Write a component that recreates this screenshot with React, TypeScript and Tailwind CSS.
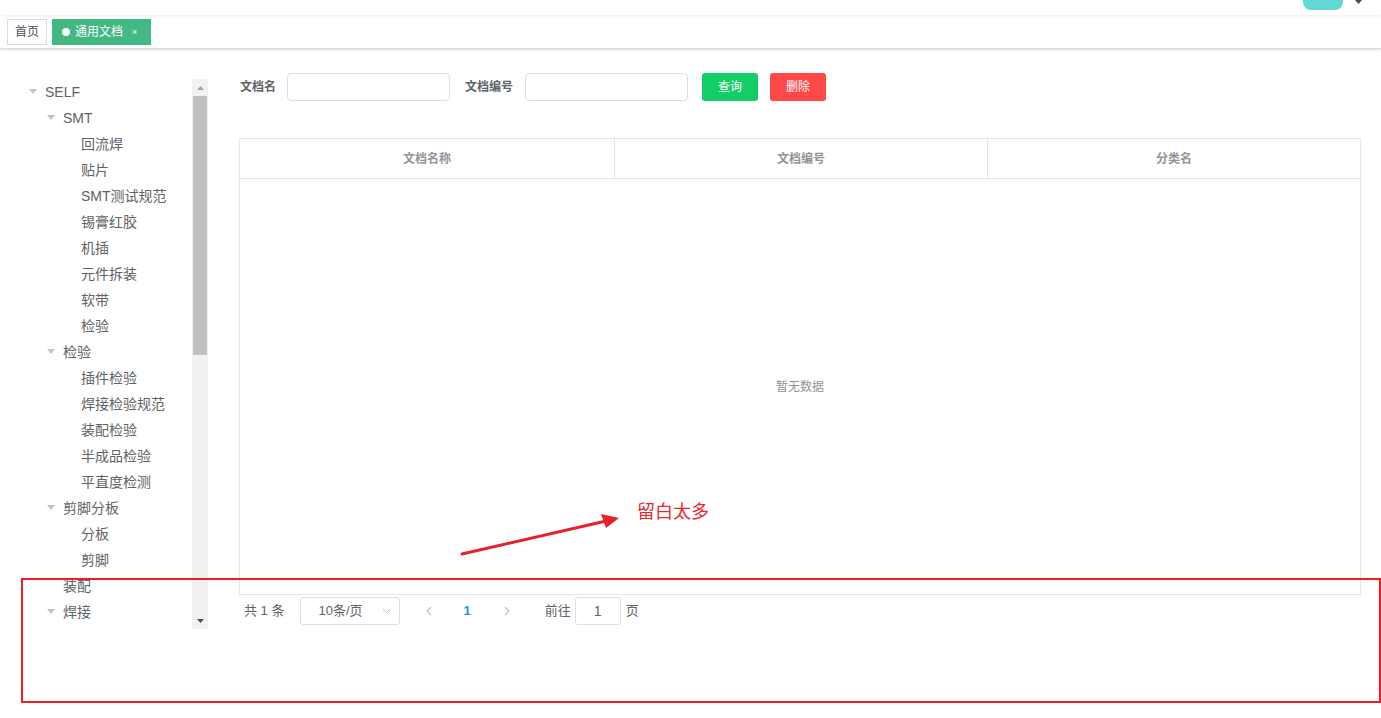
import React from "react";

type Node = { label: string; level: number; expand?: boolean };

const tree: Node[] = [
  { label: "SELF", level: 0, expand: true },
  { label: "SMT", level: 1, expand: true },
  { label: "回流焊", level: 2 },
  { label: "贴片", level: 2 },
  { label: "SMT测试规范", level: 2 },
  { label: "锡膏红胶", level: 2 },
  { label: "机插", level: 2 },
  { label: "元件拆装", level: 2 },
  { label: "软带", level: 2 },
  { label: "检验", level: 2 },
  { label: "检验", level: 1, expand: true },
  { label: "插件检验", level: 2 },
  { label: "焊接检验规范", level: 2 },
  { label: "装配检验", level: 2 },
  { label: "半成品检验", level: 2 },
  { label: "平直度检测", level: 2 },
  { label: "剪脚分板", level: 1, expand: true },
  { label: "分板", level: 2 },
  { label: "剪脚", level: 2 },
  { label: "装配", level: 1 },
  { label: "焊接", level: 1, expand: true },
];

const pad = ["pl-0", "pl-[18px]", "pl-[36px]"];

function Caret() {
  return (
    <svg width="8" height="6" viewBox="0 0 8 6">
      <path d="M0 0 L8 0 L4 5 Z" fill="#c0c4cc" />
    </svg>
  );
}

export default function App() {
  return (
    <div
      className="relative w-[1381px] h-[718px] overflow-hidden bg-white text-[#606266]"
      style={{ fontFamily: '"Liberation Sans", "Noto Sans CJK SC", sans-serif' }}
    >
      {/* navbar */}
      <div className="relative h-[15px] bg-white shadow-[0_1px_4px_rgba(0,21,41,0.08)]">
        <div className="absolute left-[1303px] top-0 w-[40px] h-[10px] rounded-b-[8px] bg-[#63d9d4]" />
        <svg className="absolute left-[1355px] top-0" width="7" height="4" viewBox="0 0 7 4">
          <path d="M0 0 L7 0 L3.5 4 Z" fill="#5a4a3a" />
        </svg>
      </div>
      {/* tags view */}
      <div className="h-[34px] bg-white border-b border-[#d8dce5] shadow-[0_1px_3px_0_rgba(0,0,0,0.12),0_0_3px_0_rgba(0,0,0,0.04)] flex items-center gap-[5px] pl-[7px] pt-[1px]">
        <div className="h-[26px] px-[7px] border border-[#d8dce5] bg-white text-[12px] text-[#495060] flex items-center">
          首页
        </div>
        <div className="h-[26px] pl-[9px] pr-[13px] border border-[#42b983] bg-[#42b983] text-[12px] text-white flex items-center">
          <span className="w-[8px] h-[8px] rounded-full bg-white mr-[5px]" />
          <span>通用文档</span>
          <span className="ml-[9px] text-[9px] leading-none">×</span>
        </div>
      </div>

      {/* main */}
      <div className="flex pt-[30px]">
        {/* sidebar tree */}
        <div className="ml-[21px] w-[187px] h-[550px] flex">
          <div className="flex-1 overflow-hidden">
            {tree.map((n, i) => (
              <div key={i} className={`h-[26px] flex items-center ${pad[n.level]}`}>
                <span className="w-[24px] flex items-center justify-center">
                  {n.expand ? <Caret /> : null}
                </span>
                <span className="text-[14px] text-[#606266]">{n.label}</span>
              </div>
            ))}
          </div>
          <div className="w-[16px] h-full bg-[#f1f1f1] flex flex-col">
            <div className="h-[17px] flex items-center justify-center">
              <svg width="7" height="4" viewBox="0 0 7 4">
                <path d="M0 4 L7 4 L3.5 0 Z" fill="#a3a3a3" />
              </svg>
            </div>
            <div className="mx-[1px] h-[259px] bg-[#c1c1c1]" />
            <div className="flex-1" />
            <div className="h-[17px] flex items-center justify-center">
              <svg width="7" height="4" viewBox="0 0 7 4">
                <path d="M0 0 L7 0 L3.5 4 Z" fill="#505050" />
              </svg>
            </div>
          </div>
        </div>

        {/* content */}
        <div className="ml-[31px] w-[1122px] -mt-[6px]">
          {/* form */}
          <div className="flex items-center h-[28px]">
            <span className="ml-[1px] text-[12px] font-bold text-[#606266] w-[47px]">文档名</span>
            <div className="w-[163px] h-[28px] border border-[#dcdfe6] rounded-[4px] bg-white" />
            <span className="ml-[15px] text-[12px] font-bold text-[#606266] w-[60px]">文档编号</span>
            <div className="w-[163px] h-[28px] border border-[#dcdfe6] rounded-[4px] bg-white" />
            <button className="ml-[14px] w-[56px] h-[28px] rounded-[3px] bg-[#13ce66] text-white text-[12px]">
              查询
            </button>
            <button className="ml-[12px] w-[56px] h-[28px] rounded-[3px] bg-[#ff4949] text-white text-[12px]">
              删除
            </button>
          </div>

          {/* table */}
          <div className="mt-[37px] h-[457px] border border-[#dfe6ec] flex flex-col">
            <div className="h-[40px] grid grid-cols-[375px_373px_1fr] border-b border-[#dfe6ec] text-[12px] font-bold text-[#909399]">
              <div className="flex items-center justify-center border-r border-[#dfe6ec]">文档名称</div>
              <div className="flex items-center justify-center border-r border-[#dfe6ec]">文档编号</div>
              <div className="flex items-center justify-center">分类名</div>
            </div>
            <div className="flex-1 flex items-center justify-center text-[12px] text-[#909399]">
              暂无数据
            </div>
          </div>

          {/* pagination */}
          <div className="flex items-center h-[28px] mt-[2px] text-[13px] text-[#606266]">
            <span className="ml-[5px]">共 1 条</span>
            <div className="ml-[16px] w-[100px] h-[28px] border border-[#dcdfe6] rounded-[3px] flex items-center pl-[17px] pr-[8px]">
              <span className="flex-1">10条/页</span>
              <svg width="9" height="6" viewBox="0 0 9 6">
                <path d="M1 1 L4.5 4.5 L8 1" fill="none" stroke="#c0c4cc" strokeWidth="1" />
              </svg>
            </div>
            <div className="ml-[24px] w-[10px] flex justify-center">
              <svg width="6" height="10" viewBox="0 0 6 10">
                <path d="M5 1 L1 5 L5 9" fill="none" stroke="#c0c4cc" strokeWidth="1.3" />
              </svg>
            </div>
            <span className="ml-[29px] font-bold text-[#1890ff]">1</span>
            <div className="ml-[31px] w-[10px] flex justify-center">
              <svg width="6" height="10" viewBox="0 0 6 10">
                <path d="M1 1 L5 5 L1 9" fill="none" stroke="#c0c4cc" strokeWidth="1.3" />
              </svg>
            </div>
            <span className="ml-[33px]">前往</span>
            <div className="ml-[4px] w-[46px] h-[28px] border border-[#dcdfe6] rounded-[3px] flex items-center justify-center text-[14px]">
              1
            </div>
            <span className="ml-[5px]">页</span>
          </div>
        </div>
      </div>

      {/* annotation overlays */}
      <div className="absolute left-[21px] top-[578px] w-[1360px] h-[125px] border-2 border-[#ee1c25] pointer-events-none" />
      <svg className="absolute left-0 top-0 pointer-events-none" width="1381" height="718">
        <line x1="462" y1="554" x2="606" y2="521" stroke="#e8202a" strokeWidth="3" strokeLinecap="round" />
        <path d="M619 518 L601 514 L606 528 Z" fill="#e8202a" />
      </svg>
      <div className="absolute left-[637px] top-[500px] text-[18px] text-[#e8262d] leading-[24px]">
        留白太多
      </div>
    </div>
  );
}
